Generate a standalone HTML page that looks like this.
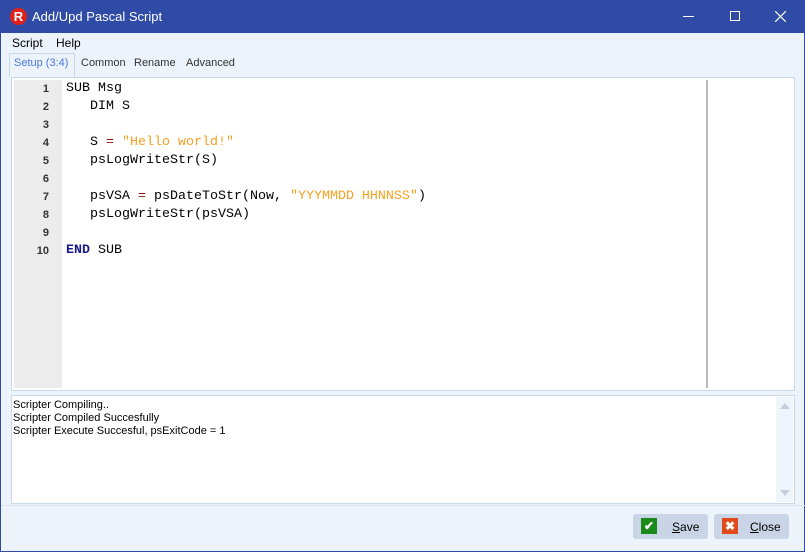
<!DOCTYPE html>
<html><head><style>
*{margin:0;padding:0;box-sizing:border-box}
body{width:805px;height:552px;background:#fff;font-family:"Liberation Sans",sans-serif;font-size:12px;position:relative;overflow:hidden}
.win{position:absolute;left:0;top:0;width:805px;height:552px;background:#ecf3fb;border:1px solid #2f4ba5;border-top:none}
.title{position:absolute;left:0;top:0;width:805px;height:33px;background:#2f4ba5;color:#fff}
.title .t{position:absolute;left:31px;top:9px;font-size:13px}
.logo{position:absolute;left:9px;top:8px;width:17px;height:17px;border-radius:50%;background:#e0201b;color:#fff;font-weight:bold;font-size:13px;text-align:center;line-height:17px}
.menu{position:absolute;top:36px;font-size:12px;color:#000}
.tab{position:absolute;top:57px;font-size:11px;color:#333}
.ed{position:absolute;left:10px;top:77px;width:784px;height:314px;background:#fff;border:1px solid #c9d9e8}
.gut{position:absolute;left:2px;top:2px;width:48px;height:308px;background:#ececec}
.ln{position:absolute;left:0;width:37px;text-align:right;font:bold 11px "Liberation Sans",sans-serif;color:#333}
.code{position:absolute;left:54px;font:13.33px "Liberation Mono",monospace;color:#000;white-space:pre}
.s{color:#f7a020}.k{color:#1a1a8c;font-weight:bold}.p{color:#8b1010}
.log{position:absolute;left:10px;top:395px;width:784px;height:109px;background:#fff;border:1px solid #c9d9e8;font-size:11px;line-height:13px;padding:3px 1px}
.sb{position:absolute;right:1px;top:1px;width:17px;height:105px;background:#eef4fb}
.btn{position:absolute;top:514px;width:75px;height:25px;background:#c9d5e6;border-radius:3px;font-size:12px}
.ic{position:absolute;left:8px;top:4px;width:16px;height:16px;color:#fff;font-weight:bold;text-align:center;line-height:16px;font-size:12px}
</style></head><body>
<div class="win">
<div class="title"><div class="logo">R</div><div class="t">Add/Upd Pascal Script</div>
<div style="position:absolute;left:682px;top:16px;width:11px;height:1px;background:#fff"></div>
<div style="position:absolute;left:729px;top:11px;width:10px;height:10px;border:1px solid #fff"></div>
<svg style="position:absolute;left:774px;top:11px" width="11" height="11"><path d="M0 0L11 11M11 0L0 11" stroke="#fff" stroke-width="1.2"/></svg>
</div>
<div class="menu" style="left:11px">Script</div><div class="menu" style="left:55px">Help</div>
<div style="position:absolute;left:8px;top:53px;width:66px;height:24px;border:1px solid #c9d9e8;border-bottom:none;background:#ecf3fb"></div>
<div class="tab" style="left:13px;color:#4a7ad8">Setup (3:4)</div>
<div class="tab" style="left:80px">Common</div><div class="tab" style="left:133px">Rename</div><div class="tab" style="left:185px">Advanced</div>
<div class="ed">
<div class="gut"></div>
<div style="position:absolute;left:694px;top:2px;width:2px;height:308px;background:#bbb"></div>
<div class="ln" style="top:5px">1</div><div class="ln" style="top:23px">2</div><div class="ln" style="top:41px">3</div><div class="ln" style="top:59px">4</div><div class="ln" style="top:77px">5</div><div class="ln" style="top:95px">6</div><div class="ln" style="top:113px">7</div><div class="ln" style="top:131px">8</div><div class="ln" style="top:149px">9</div><div class="ln" style="top:167px">10</div>
<div class="code" style="top:3px">SUB Msg</div>
<div class="code" style="top:21px">   DIM S</div>
<div class="code" style="top:57px">   S <span class="p">=</span> <span class="s">"Hello world!"</span></div>
<div class="code" style="top:75px">   psLogWriteStr(S)</div>
<div class="code" style="top:111px">   psVSA <span class="p">=</span> psDateToStr(Now, <span class="s">"YYYMMDD HHNNSS"</span>)</div>
<div class="code" style="top:129px">   psLogWriteStr(psVSA)</div>
<div class="code" style="top:165px"><span class="k">END</span> SUB</div>
</div>
<div class="log">Scripter Compiling..<br>Scripter Compiled Succesfully<br>Scripter Execute Succesful, psExitCode = 1
<div class="sb"><div style="position:absolute;left:4px;top:6px;border:5px solid transparent;border-bottom:6px solid #c5cfdc;border-top:none"></div><div style="position:absolute;left:4px;bottom:6px;border:5px solid transparent;border-top:6px solid #c5cfdc;border-bottom:none"></div></div></div>
<div style="position:absolute;left:0;top:505px;width:805px;height:1px;background:#d8e3ef"></div>
<div class="btn" style="left:632px"><div class="ic" style="background:#1a8a1a">✔</div><span style="position:absolute;left:39px;top:6px"><u>S</u>ave</span></div>
<div class="btn" style="left:713px"><div class="ic" style="background:#e04a1a">✖</div><span style="position:absolute;left:36px;top:6px"><u>C</u>lose</span></div>
</div>
</body></html>
